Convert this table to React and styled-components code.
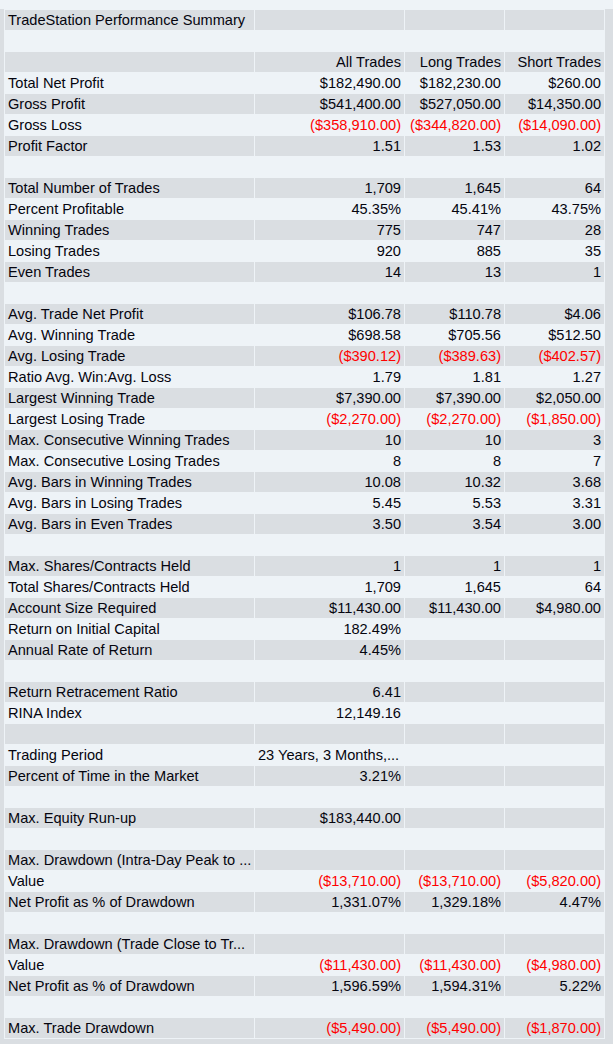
import React from "react";
import styled, { createGlobalStyle } from "styled-components";

const GlobalStyle = createGlobalStyle`
  html, body {
    margin: 0;
    padding: 0;
    background: #eef3f7;
  }
  body {
    font-family: "Liberation Sans", Arial, sans-serif;
  }
`;

const Page = styled.div`
  padding-top: 9px;
  background: #eef3f7;
`;

const Frame = styled.div`
  background: #dadee2;
  padding: 0 8px 8px 4px;
`;

const Table = styled.table`
  width: 601px;
  table-layout: fixed;
  border-collapse: separate;
  border-spacing: 1px;
  background: #eef3f7;
  font-size: 14.6px;
  color: #05050f;
`;

const Row = styled.tr`
  background: ${({ $shade }) => ($shade ? "#dadee2" : "#eef3f7")};
`;

const Cell = styled.td`
  height: 20px;
  padding: 0 3px;
  line-height: 20px;
  white-space: nowrap;
  overflow: hidden;
  text-align: ${({ $align }) => $align || "right"};
  color: ${({ $neg }) => ($neg ? "#ff0000" : "inherit")};
`;

const Label = styled(Cell)`
  text-align: left;
`;

const rows = [
  ["TradeStation Performance Summary"],
  null,
  ["", "All Trades", "Long Trades", "Short Trades"],
  ["Total Net Profit", "$182,490.00", "$182,230.00", "$260.00"],
  ["Gross Profit", "$541,400.00", "$527,050.00", "$14,350.00"],
  ["Gross Loss", "($358,910.00)", "($344,820.00)", "($14,090.00)"],
  ["Profit Factor", "1.51", "1.53", "1.02"],
  null,
  ["Total Number of Trades", "1,709", "1,645", "64"],
  ["Percent Profitable", "45.35%", "45.41%", "43.75%"],
  ["Winning Trades", "775", "747", "28"],
  ["Losing Trades", "920", "885", "35"],
  ["Even Trades", "14", "13", "1"],
  null,
  ["Avg. Trade Net Profit", "$106.78", "$110.78", "$4.06"],
  ["Avg. Winning Trade", "$698.58", "$705.56", "$512.50"],
  ["Avg. Losing Trade", "($390.12)", "($389.63)", "($402.57)"],
  ["Ratio Avg. Win:Avg. Loss", "1.79", "1.81", "1.27"],
  ["Largest Winning Trade", "$7,390.00", "$7,390.00", "$2,050.00"],
  ["Largest Losing Trade", "($2,270.00)", "($2,270.00)", "($1,850.00)"],
  ["Max. Consecutive Winning Trades", "10", "10", "3"],
  ["Max. Consecutive Losing Trades", "8", "8", "7"],
  ["Avg. Bars in Winning Trades", "10.08", "10.32", "3.68"],
  ["Avg. Bars in Losing Trades", "5.45", "5.53", "3.31"],
  ["Avg. Bars in Even Trades", "3.50", "3.54", "3.00"],
  null,
  ["Max. Shares/Contracts Held", "1", "1", "1"],
  ["Total Shares/Contracts Held", "1,709", "1,645", "64"],
  ["Account Size Required", "$11,430.00", "$11,430.00", "$4,980.00"],
  ["Return on Initial Capital", "182.49%"],
  ["Annual Rate of Return", "4.45%"],
  null,
  ["Return Retracement Ratio", "6.41"],
  ["RINA Index", "12,149.16"],
  null,
  ["Trading Period", "23 Years, 3 Months,..."],
  ["Percent of Time in the Market", "3.21%"],
  null,
  ["Max. Equity Run-up", "$183,440.00"],
  null,
  ["Max. Drawdown (Intra-Day Peak to ..."],
  ["Value", "($13,710.00)", "($13,710.00)", "($5,820.00)"],
  ["Net Profit as % of Drawdown", "1,331.07%", "1,329.18%", "4.47%"],
  null,
  ["Max. Drawdown (Trade Close to Tr..."],
  ["Value", "($11,430.00)", "($11,430.00)", "($4,980.00)"],
  ["Net Profit as % of Drawdown", "1,596.59%", "1,594.31%", "5.22%"],
  null,
  ["Max. Trade Drawdown", "($5,490.00)", "($5,490.00)", "($1,870.00)"],
];

const widths = [249, 149, 99, 99];

export default function App() {
  return (
    <Page>
      <GlobalStyle />
      <Frame>
        <Table>
          <colgroup>
            {widths.map((w, i) => (
              <col key={i} style={{ width: w }} />
            ))}
          </colgroup>
          <tbody>
            {rows.map((r, i) => {
              const cells = r || [];
              return (
                <Row key={i} $shade={i % 2 === 0}>
                  <Label>{cells[0] || ""}</Label>
                  {[1, 2, 3].map((c) => {
                    const v = cells[c] || "";
                    const long = v.endsWith("...");
                    return (
                      <Cell
                        key={c}
                        $neg={v.startsWith("(")}
                        $align={long ? "left" : "right"}
                      >
                        {v}
                      </Cell>
                    );
                  })}
                </Row>
              );
            })}
          </tbody>
        </Table>
      </Frame>
    </Page>
  );
}
